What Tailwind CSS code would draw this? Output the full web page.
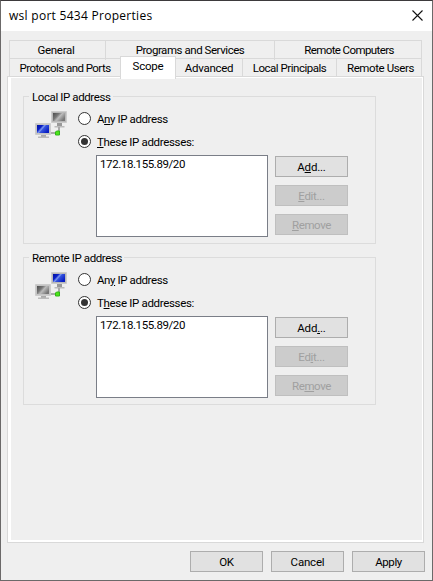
<!DOCTYPE html>
<html lang="en"><head><meta charset="utf-8"><title>wsl port 5434 Properties</title>
<script src="https://cdn.jsdelivr.net/npm/@tailwindcss/browser@4"></script></head>
<body class="w-[433px] h-[581px] overflow-hidden bg-[#efefef] text-black font-[Roboto,'Liberation_Sans',sans-serif] text-[11.5px] leading-[14px] tracking-[-0.4px]">
<svg width="0" height="0" class="absolute"><defs>
<linearGradient id="blue" x2="1" y2=".6"><stop offset="0" stop-color="#0010a0"/><stop offset=".35" stop-color="#0b20c8"/><stop offset=".5" stop-color="#7f9bf0"/><stop offset=".6" stop-color="#3553dc"/><stop offset="1" stop-color="#0a1fc4"/></linearGradient>
<linearGradient id="gray" x2="1" y2=".6"><stop offset="0" stop-color="#4c4c4c"/><stop offset=".4" stop-color="#777"/><stop offset=".6" stop-color="#bbb"/><stop offset="1" stop-color="#777"/></linearGradient>
</defs></svg>
<div class="w-[433px] h-[581px] border border-[#6b6969] border-t-[#3d3a3c] flex flex-col">
  <header class="h-[30px] bg-white flex items-center justify-between pl-2 pr-[9px] shrink-0">
    <h1 class="font-['Open_Sans','Noto_Sans',sans-serif] text-[12px] tracking-[0.28px] leading-[16px] whitespace-nowrap">wsl port 5434 Properties</h1>
    <svg width="11" height="11" viewBox="0 0 11 11" class="mt-[-1px]"><path d="M.5.5l10 10M10.5.5l-10 10" stroke="#111" stroke-width="1.1"/></svg>
  </header>
  <nav class="mt-[9px] ml-2 w-[413px] shrink-0 whitespace-nowrap">
    <div class="grid grid-cols-[97px_169px_147px] h-[18px] border-t border-[#d9d9d9] text-center leading-[19px]">
      <div class="border-x border-[#d9d9d9] pr-[3px] tracking-[-0.3px]">General</div><div class="border-r border-[#d9d9d9] tracking-[-0.45px]">Programs and Services</div><div class="border-r border-[#d9d9d9] pl-[2px] tracking-[-0.6px]">Remote Computers</div>
    </div>
    <div class="grid grid-cols-[111px_56px_67px_94px_85px] h-[18px] text-center leading-[19px]">
      <div class="border-l border-t border-[#d9d9d9] tracking-[-0.55px]">Protocols and Ports</div><div class="relative z-10 -mt-[2px] h-[23px] bg-white border border-b-0 border-[#d9d9d9] leading-[18px] tracking-[-0.2px]">Scope</div><div class="border-r border-t border-[#d9d9d9] tracking-[-0.25px]">Advanced</div><div class="border-r border-t border-[#d9d9d9] tracking-[-0.48px]">Local Principals</div><div class="border-r border-t border-[#d9d9d9] pl-[3px]">Remote Users</div>
    </div>
  </nav>
  <main class="ml-[6px] w-[417px] h-[467px] border border-[#d9d9d9] bg-white pt-px pl-[3px] pr-px pb-[2px] shrink-0">
    <div class="h-full bg-[#efefef] pl-3 pt-[18px]">
      <section class="relative w-[353px] h-[148px] border border-[#dcdcdc] mb-[13px] pt-[15px] pl-[11px] flex">
        <h2 class="absolute -top-[7px] left-[5px] pl-[3px] w-[84px] bg-[#efefef] whitespace-nowrap">Local IP address</h2>
        <svg width="34" height="32" viewBox="0 0 34 32" class="-mt-[2px] shrink-0">
          <path d="M22 12h5v4h-5z" fill="#999"/><path d="M19.5 16h10v1.5h-10z" fill="#bbb"/><path d="M24 17v6M16 23h6" stroke="#aaa" stroke-width="2" fill="none"/>
          <path d="M16.5 1.5h15v11h-15z" fill="#b8b8b8" stroke="#ccc"/><path d="M18 3h12v8H18z" fill="url(#gray)"/>
          <path d="M6 25h5v3H6z" fill="#aaa"/><path d="M3 26.5h11v1.5H3z" fill="#bbb"/>
          <path d="M.5 13.5h15v11H.5z" fill="#c4c4c4" stroke="#ccc"/><path d="M2 15h12v8H2z" fill="url(#blue)"/>
          <path d="M20.5 22l1-1h3v4h-4z" fill="#4ce518" stroke="#32b51a"/></svg>
        <div class="ml-[9px] w-[290px]">
          <label class="flex h-[23px] items-start gap-[6px]"><svg width="13" height="13"><circle cx="6.5" cy="6.5" r="6" fill="#fff" stroke="#333"/></svg><span>A<u>n</u>y IP address</span></label>
          <label class="flex h-[20px] items-start gap-[6px]"><svg width="13" height="13"><circle cx="6.5" cy="6.5" r="6" fill="#fff" stroke="#333"/><circle cx="6.5" cy="6.5" r="3.5" fill="#333"/></svg><span class="tracking-[-0.33px]"><u>T</u>hese IP addresses:</span></label>
          <div class="flex ml-[18px] gap-[7px]"><div class="w-[172px] h-[82px] border border-[#7a7e87] bg-white pl-[3px] pt-px">172.18.155.89/20</div>
            <div class="flex flex-col gap-2 pt-px"><button class="w-[73px] h-[21px] bg-[#e1e1e1] border border-[#adadad] tracking-[-0.2px]">A<u>d</u>d...</button><button class="w-[73px] h-[21px] bg-[#ccc] border border-[#bfbfbf] text-[#a0a0a0] tracking-[-0.3px]"><u>E</u>dit...</button><button class="w-[73px] h-[21px] bg-[#ccc] border border-[#bfbfbf] text-[#a0a0a0]"><u>R</u>emove</button></div></div>
        </div>
      </section>
      <section class="relative w-[353px] h-[148px] border border-[#dcdcdc] pt-[15px] pl-[11px] flex">
        <h2 class="absolute -top-[7px] left-[5px] pl-[3px] w-[95px] bg-[#efefef] whitespace-nowrap">Remote IP address</h2>
        <svg width="34" height="32" viewBox="0 0 34 32" class="-mt-[2px] shrink-0">
          <path d="M22 12h5v4h-5z" fill="#999"/><path d="M19.5 16h10v1.5h-10z" fill="#bbb"/><path d="M24 17v6M16 23h6" stroke="#aaa" stroke-width="2" fill="none"/>
          <path d="M16.5 1.5h15v11h-15z" fill="#b8b8b8" stroke="#ccc"/><path d="M18 3h12v8H18z" fill="url(#blue)"/>
          <path d="M6 25h5v3H6z" fill="#aaa"/><path d="M3 26.5h11v1.5H3z" fill="#bbb"/>
          <path d="M.5 13.5h15v11H.5z" fill="#c4c4c4" stroke="#ccc"/><path d="M2 15h12v8H2z" fill="url(#gray)"/>
          <path d="M20.5 22l1-1h3v4h-4z" fill="#4ce518" stroke="#32b51a"/></svg>
        <div class="ml-[9px] w-[290px]">
          <label class="flex h-[23px] items-start gap-[6px]"><svg width="13" height="13"><circle cx="6.5" cy="6.5" r="6" fill="#fff" stroke="#333"/></svg><span>An<u>y</u> IP address</span></label>
          <label class="flex h-[20px] items-start gap-[6px]"><svg width="13" height="13"><circle cx="6.5" cy="6.5" r="6" fill="#fff" stroke="#333"/><circle cx="6.5" cy="6.5" r="3.5" fill="#333"/></svg><span class="tracking-[-0.33px]">T<u>h</u>ese IP addresses:</span></label>
          <div class="flex ml-[18px] gap-[7px]"><div class="w-[172px] h-[82px] border border-[#7a7e87] bg-white pl-[3px] pt-px">172.18.155.89/20</div>
            <div class="flex flex-col gap-2 pt-px"><button class="w-[73px] h-[21px] bg-[#e1e1e1] border border-[#adadad] tracking-[-0.2px]">Add<u>.</u>..</button><button class="w-[73px] h-[21px] bg-[#ccc] border border-[#bfbfbf] text-[#a0a0a0] tracking-[-0.3px]">Ed<u>i</u>t...</button><button class="w-[73px] h-[21px] bg-[#ccc] border border-[#bfbfbf] text-[#a0a0a0]">Re<u>m</u>ove</button></div></div>
        </div>
      </section>
    </div>
  </main>
  <footer class="flex justify-end gap-2 mt-2 pr-[7px]"><button class="w-[73px] h-[21px] bg-[#e1e1e1] border border-[#adadad]">OK</button><button class="w-[73px] h-[21px] bg-[#e1e1e1] border border-[#adadad] tracking-[-0.2px]">Cancel</button><button class="w-[73px] h-[21px] bg-[#e1e1e1] border border-[#adadad]">Apply</button></footer>
</div></body></html>
